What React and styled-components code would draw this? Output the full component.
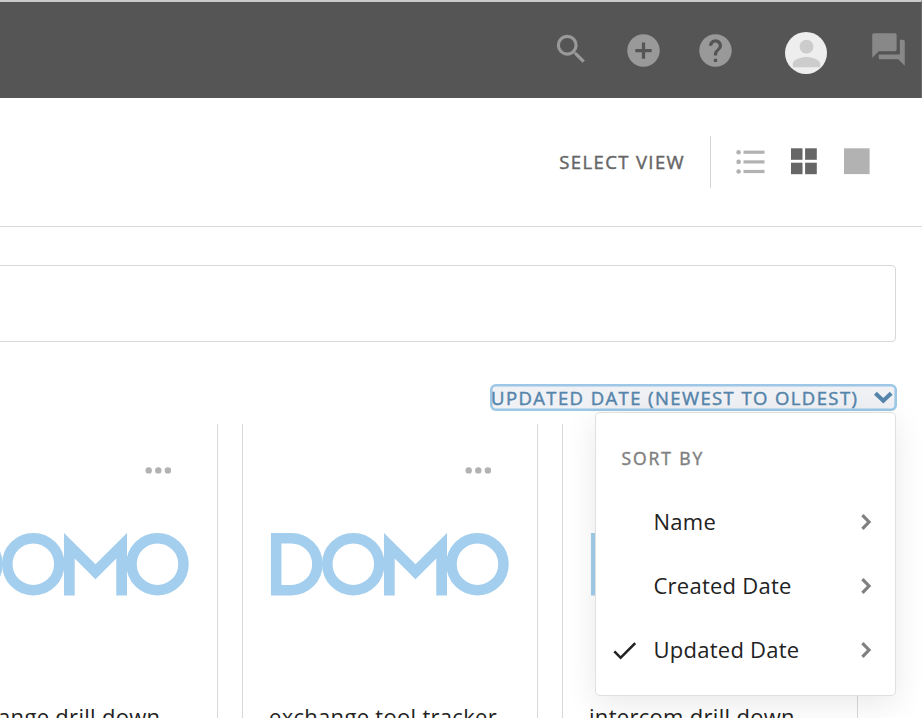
import React from "react";
import styled, { createGlobalStyle } from "styled-components";
import {
  MdAddCircle,
  MdCheck,
  MdForum,
  MdHelp,
  MdPerson,
  MdSearch,
} from "react-icons/md";

const GlobalStyle = createGlobalStyle`
  * {
    box-sizing: border-box;
  }
  body {
    margin: 0;
    background: #fff;
    font-family: "Open Sans", "Liberation Sans", sans-serif;
    overflow: hidden;
  }
  svg {
    display: block;
    flex: none;
  }
`;

const Page = styled.div`
  width: 922px;
  height: 718px;
  overflow: hidden;
  background: #fff;
`;

const Header = styled.header`
  height: 98px;
  padding-right: 13px;
  display: flex;
  align-items: center;
  justify-content: flex-end;
  border-top: 2px solid #c9cacb;
  border-right: 1px solid #6a6a6a;
  background: #555;
  color: #999;
`;

const HeaderIcon = styled.span`
  display: flex;
  margin-right: ${(props) => props.$gap || 0}px;
  padding-bottom: ${(props) => props.$lift || 0}px;
  color: ${(props) => props.$color || "inherit"};
`;

const Avatar = styled.div`
  width: 42px;
  height: 42px;
  margin: 6px 42px 0 0;
  display: flex;
  align-items: center;
  justify-content: center;
  border-radius: 50%;
  background: #eee;
  color: #ccc;
`;

const ViewBar = styled.div`
  height: 129px;
  padding-right: 52px;
  display: flex;
  align-items: center;
  justify-content: flex-end;
  border-bottom: 1px solid #d8d8d8;
`;

const ViewLabel = styled.span`
  height: 52px;
  padding-right: 25px;
  margin-right: 25px;
  border-right: 1px solid #d4d4d4;
  font-size: 18.5px;
  line-height: 51px;
  letter-spacing: 1.37px;
  color: #666;
  -webkit-text-stroke: 0.45px;
`;

const ViewOptions = styled.div`
  padding-bottom: 1px;
  display: flex;
  align-items: center;
  gap: 26px;
`;

const FilterBox = styled.div`
  width: 920px;
  height: 77px;
  margin: 38px 0 0 -24px;
  border: 1px solid #d8d8d8;
  border-radius: 4px;
`;

const SortRow = styled.div`
  height: 28px;
  margin-top: 42px;
  padding-right: 25px;
  display: flex;
  justify-content: flex-end;
`;

const SortAnchor = styled.div`
  position: relative;
`;

const SortButton = styled.button`
  width: 407px;
  height: 27px;
  padding: 0 4px 0 1px;
  display: flex;
  align-items: center;
  justify-content: space-between;
  border: 0;
  border-radius: 6px;
  background: #f0f1f5;
  box-shadow: inset 0 0 0 2.6px #9cc7e7;
  font-family: inherit;
  font-size: 18.5px;
  line-height: 26px;
  letter-spacing: 1.4px;
  white-space: nowrap;
  color: #5585ab;
  -webkit-text-stroke: 0.45px;
`;

const Menu = styled.div`
  position: absolute;
  top: 28px;
  right: 1px;
  width: 301px;
  height: 284px;
  padding-top: 29px;
  border: 1px solid #e0e0e0;
  border-radius: 5px;
  background: #fff;
  box-shadow: 0 8px 32px rgba(0, 0, 0, 0.09);
`;

const MenuTitle = styled.div`
  height: 47px;
  padding-left: 25.5px;
  font-size: 17.5px;
  line-height: 33px;
  letter-spacing: 1.9px;
  color: #808080;
  -webkit-text-stroke: 0.45px;
`;

const MenuItem = styled.div`
  height: 64px;
  padding-right: 23px;
  display: flex;
  align-items: center;
  font-size: 22px;
  letter-spacing: 0.25px;
  color: #222;

  > svg {
    margin-top: 2px;
  }
`;

const MenuCheck = styled.span`
  width: 57.5px;
  padding: 2px 0 0 12.5px;
`;

const MenuText = styled.span`
  flex: 1;
`;

const Cards = styled.div`
  margin: 12px 0 0 -78px;
  display: flex;
  gap: 24px;
`;

const Card = styled.div`
  flex: none;
  width: 296px;
  height: 320px;
  padding: 43px 26px 0;
  border: 1px solid #d8d8d8;
  border-width: 0 1px;
`;

const CardMore = styled.div`
  margin-right: 19px;
  display: flex;
  justify-content: flex-end;
`;

const CardLogo = styled.div`
  margin: 57px 0 0 1px;
`;

const CardTitle = styled.div`
  margin-top: 105px;
  font-size: 22px;
  line-height: 30px;
  letter-spacing: 0.3px;
  white-space: nowrap;
  color: #222;
`;

const ListIcon = () => (
  <svg width="29" height="26" viewBox="0 0 29 26" fill="#b2b2b2">
    {[3.2, 12.9, 22.5].map((y) => (
      <g key={y}>
        <circle cx="2.6" cy={y} r="2.3" />
        <rect x="7.5" y={y - 1.6} width="21" height="3.2" />
      </g>
    ))}
  </svg>
);

const GridIcon = () => (
  <svg width="27" height="27" viewBox="0 0 27 27" fill="#666">
    <rect x="0" y="0.3" width="11.5" height="11.5" />
    <rect x="14.1" y="0.3" width="11.7" height="11.5" />
    <rect x="0" y="14.7" width="11.5" height="11.5" />
    <rect x="14.1" y="14.7" width="11.7" height="11.5" />
  </svg>
);

const SquareIcon = () => (
  <svg width="26" height="27" viewBox="0 0 26 27" fill="#b2b2b2">
    <rect x="-0.2" y="0.3" width="25.8" height="25.8" />
  </svg>
);

const MoreIcon = () => (
  <svg width="27" height="8" viewBox="0 0 27 8" fill="#b2b2b2">
    <circle cx="3.7" cy="3.4" r="3.2" />
    <circle cx="13.3" cy="3.4" r="3.2" />
    <circle cx="22.9" cy="3.4" r="3.2" />
  </svg>
);

const ChevronDown = () => (
  <svg width="19" height="13" viewBox="0 0 19 13" fill="none">
    <path d="M1.4 2.2 9.3 9.8l7.9-7.6" stroke="#5585ab" strokeWidth="4" />
  </svg>
);

const ChevronRight = () => (
  <svg width="12" height="18" viewBox="0 0 12 18" fill="none">
    <path d="M2.4 2.2 9 9l-6.6 6.8" stroke="#808080" strokeWidth="3.2" />
  </svg>
);

const Logo = () => (
  <svg
    width="239"
    height="64"
    viewBox="0 0 239 64"
    fill="none"
    stroke="#a3ceee"
    strokeWidth="10.5"
  >
    <path d="M6.2 6.2h15.2a26 26 0 0 1 0 52H6.2z" />
    <circle cx="83.3" cy="32.2" r="26" />
    <path
      d="M114 .9l31.5 31.4L177 .9v62.5h-10.7V26.6l-20.8 20.6-20.8-20.6v36.8H114z"
      fill="#a3ceee"
      stroke="none"
    />
    <circle cx="207.5" cy="32.2" r="26" />
  </svg>
);

const sortOptions = ["Name", "Created Date", "Updated Date"];

const cards = [
  "exchange drill down",
  "exchange tool tracker",
  "intercom drill down",
];

const SortMenu = ({ selected }) => (
  <Menu>
    <MenuTitle>SORT BY</MenuTitle>
    {sortOptions.map((option) => (
      <MenuItem key={option}>
        <MenuCheck>{option === selected && <MdCheck size={31} />}</MenuCheck>
        <MenuText>{option}</MenuText>
        <ChevronRight />
      </MenuItem>
    ))}
  </Menu>
);

const App = () => (
  <>
    <GlobalStyle />
    <Page>
      <Header>
        <HeaderIcon $gap={34} $lift={1}>
          <MdSearch size={38.5} />
        </HeaderIcon>
        <HeaderIcon $gap={33}>
          <MdAddCircle size={39} />
        </HeaderIcon>
        <HeaderIcon $gap={50}>
          <MdHelp size={39} />
        </HeaderIcon>
        <Avatar>
          <MdPerson size={41} />
        </Avatar>
        <HeaderIcon $lift={1} $color="#888">
          <MdForum size={39} />
        </HeaderIcon>
      </Header>

      <ViewBar>
        <ViewLabel>SELECT VIEW</ViewLabel>
        <ViewOptions>
          <ListIcon />
          <GridIcon />
          <SquareIcon />
        </ViewOptions>
      </ViewBar>

      <FilterBox />

      <SortRow>
        <SortAnchor>
          <SortButton>
            UPDATED DATE (NEWEST TO OLDEST)
            <ChevronDown />
          </SortButton>
          <SortMenu selected="Updated Date" />
        </SortAnchor>
      </SortRow>

      <Cards>
        {cards.map((title) => (
          <Card key={title}>
            <CardMore>
              <MoreIcon />
            </CardMore>
            <CardLogo>
              <Logo />
            </CardLogo>
            <CardTitle>{title}</CardTitle>
          </Card>
        ))}
      </Cards>
    </Page>
  </>
);

export default App;
